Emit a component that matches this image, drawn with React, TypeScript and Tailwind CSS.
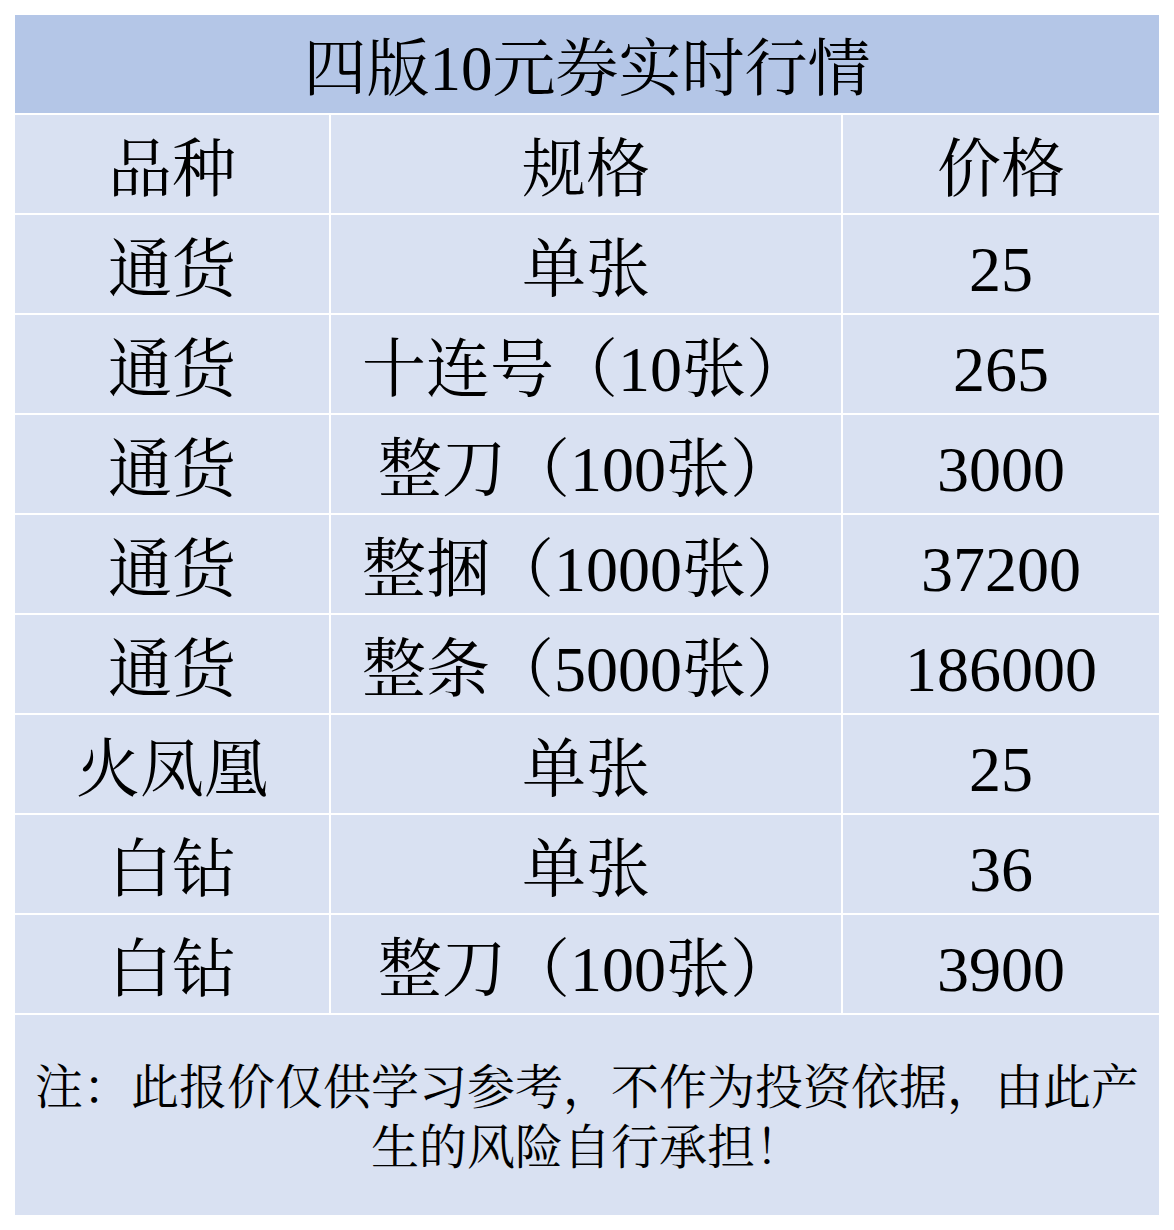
import React from "react";

const rows: [string, string, string][] = [
  ["通货", "单张", "25"],
  ["通货", "十连号（10张）", "265"],
  ["通货", "整刀（100张）", "3000"],
  ["通货", "整捆（1000张）", "37200"],
  ["通货", "整条（5000张）", "186000"],
  ["火凤凰", "单张", "25"],
  ["白钻", "单张", "36"],
  ["白钻", "整刀（100张）", "3900"],
];

const font = {
  fontFamily:
    '"Liberation Serif", "Noto Serif CJK SC", "Noto Sans CJK SC", serif',
};

function Cell({ children }: { children: React.ReactNode }) {
  return (
    <div className="h-[98px] bg-[#d9e1f2] flex items-center justify-center pt-[12px] text-[64px] leading-none text-black whitespace-nowrap">
      {children}
    </div>
  );
}

export default function App() {
  return (
    <div className="w-[1174px] h-[1230px] bg-white p-[15px]" style={font}>
      <div className="grid grid-cols-[314px_510px_316px] gap-[2px] bg-white">
        <div className="col-span-3 h-[98px] bg-[#b4c6e7] flex items-center justify-center pt-[10px] text-[63px] leading-none text-black">
          四版10元券实时行情
        </div>
        <Cell>品种</Cell>
        <Cell>规格</Cell>
        <Cell>价格</Cell>
        {rows.map((r, i) => (
          <React.Fragment key={i}>
            <Cell>{r[0]}</Cell>
            <Cell>{r[1]}</Cell>
            <Cell>{r[2]}</Cell>
          </React.Fragment>
        ))}
        <div className="col-span-3 h-[200px] bg-[#d9e1f2] flex items-center justify-center px-[18px] pt-[6px] text-[48px] leading-[60px] text-center text-black">
          注：此报价仅供学习参考，不作为投资依据，由此产生的风险自行承担！
        </div>
      </div>
    </div>
  );
}
